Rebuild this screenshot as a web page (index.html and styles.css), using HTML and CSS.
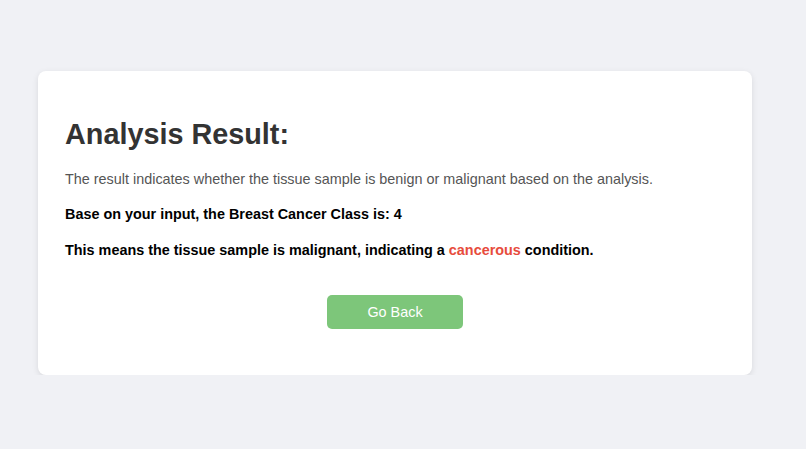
FILE: index.html
```html
<!DOCTYPE html>
<html lang="en">
<head>
    <meta charset="UTF-8">
    <title>Analysis Result</title>
    <link rel="stylesheet" href="styles.css">
</head>
<body>
<div class="result-card">
    <h1 class="result-card__title">Analysis Result:</h1>

    <p class="result-card__intro">The result indicates whether the tissue sample is benign or malignant based on the analysis.</p>

    <p class="result-card__line">Base on your input, the Breast Cancer Class is: 4</p>

    <p class="result-card__line result-card__line--last">This means the tissue sample is malignant, indicating a <span class="result-card__danger">cancerous</span> condition.</p>

    <div class="result-card__actions">
        <a href="#" class="result-card__btn">Go Back</a>
    </div>
</div>
</body>
</html>
```

FILE: styles.css
```css
html {
    height: 100%;
}

body {
    margin: 0;
    padding: 71px 0 0 38px;
    background-color: #f0f1f5;
    font-family: "Liberation Sans", Arial, sans-serif;
}

.result-card {
    width: 714px;
    box-sizing: border-box;
    padding: 47px 27px 46px;
    background-color: #fff;
    border-radius: 8px;
    box-shadow: 0 2px 6px rgba(0, 0, 0, 0.1);
}

.result-card__title {
    margin: 0 0 20px;
    font-size: 28.8px;
    line-height: 32px;
    color: #333;
}

.result-card__intro {
    margin: 0 0 17px;
    font-size: 14.4px;
    line-height: 18px;
    color: #555;
}

.result-card__line {
    margin: 0 0 18px;
    font-size: 14.4px;
    line-height: 18px;
    font-weight: bold;
    color: #000;
}
.result-card__line--last {
    margin-bottom: 0;
}

.result-card__danger {
    color: #e74c3c;
}

.result-card__actions {
    margin-top: 36px;
    text-align: center;
}

.result-card__btn {
    display: inline-block;
    padding: 8px 40px;
    line-height: 18px;
    font-size: 14.4px;
    color: #fff;
    text-decoration: none;
    background-color: #7dc67a;
    border-radius: 5px;
}
```
